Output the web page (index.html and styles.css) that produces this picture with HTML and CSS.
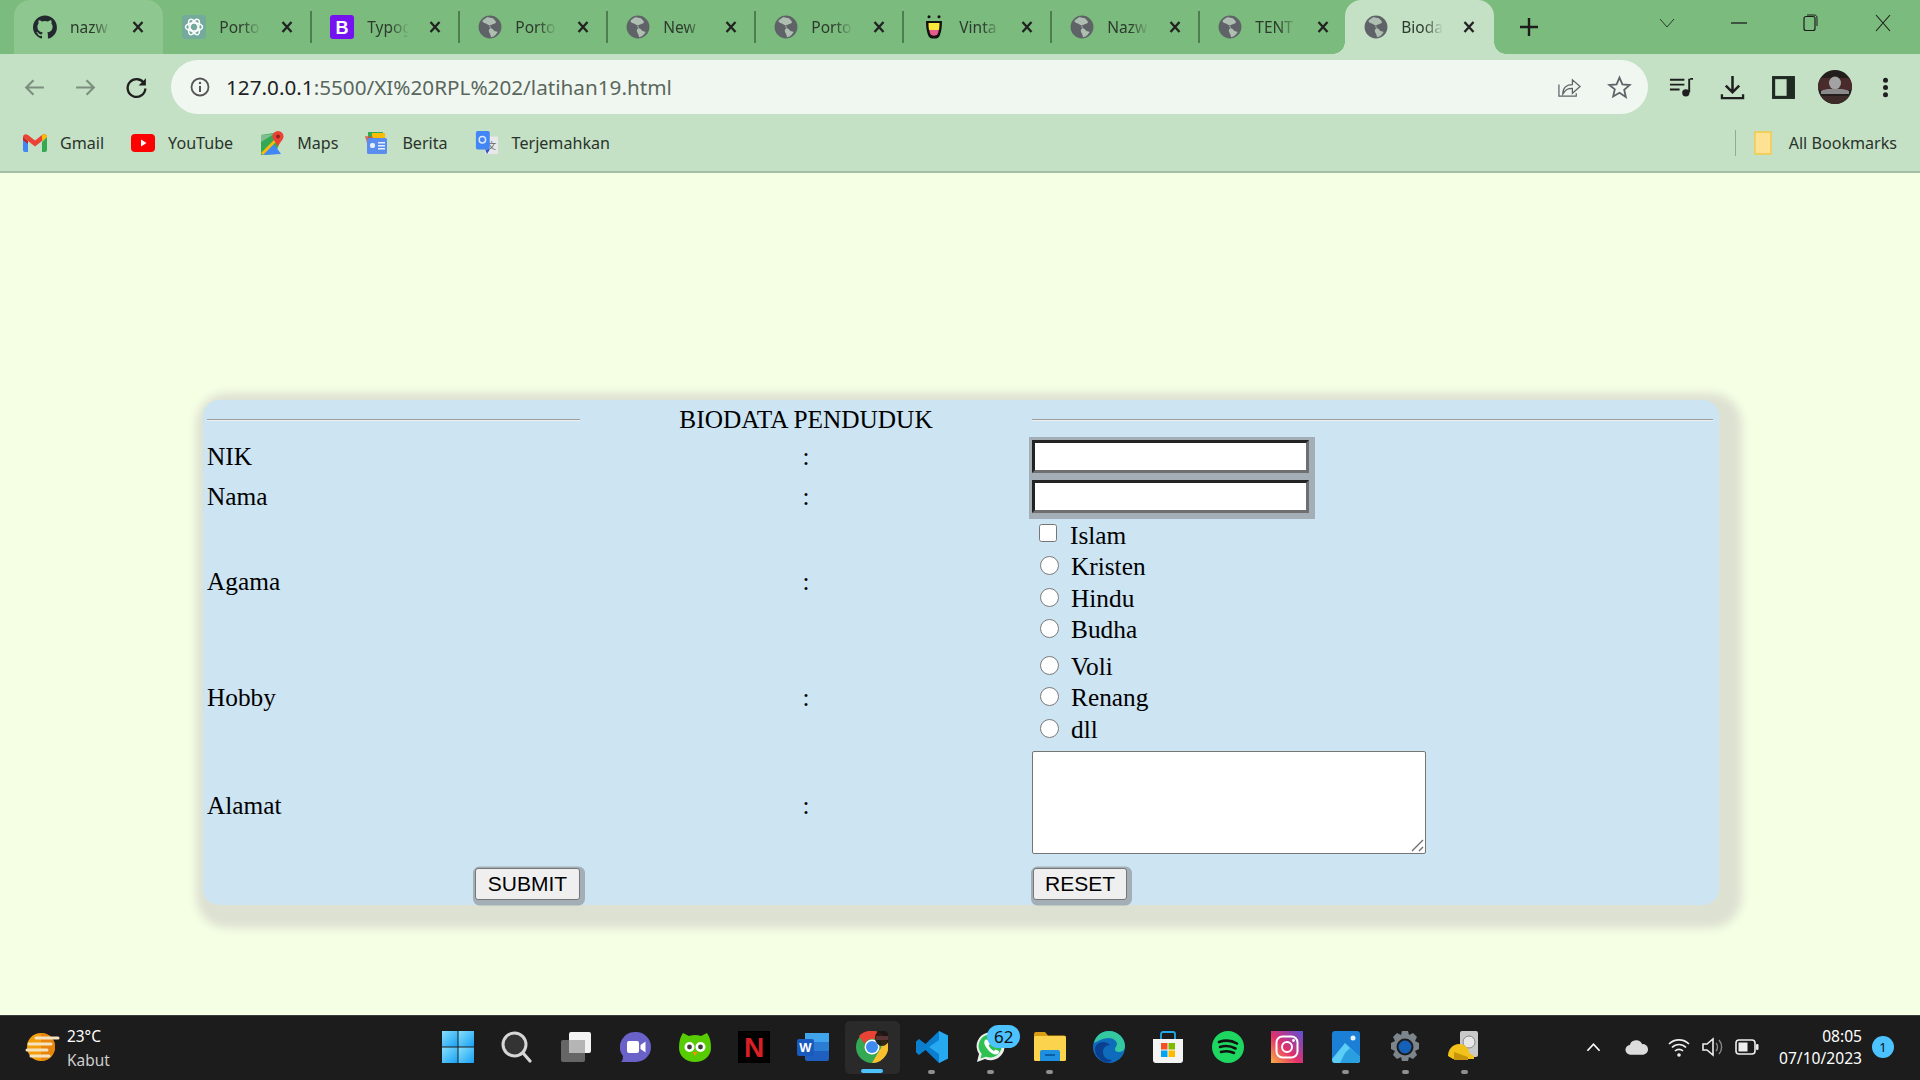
FILE: index.html
```html
<!DOCTYPE html>
<html lang="id">
<head>
<meta charset="utf-8">
<title>Biodata</title>
<link rel="stylesheet" href="styles.css">
</head>
<body>
<svg class="defs" width="0" height="0" aria-hidden="true">
  <symbol id="globe" viewBox="0 0 22 22">
    <circle cx="11" cy="11" r="10.5" fill="#5f6368"/>
    <path d="M9 1.500c-1.500 1.500-4 2-5 4 .5 2 3 2 4.500 3s3 .8 3 2.500-2 2-1.500 4 1.500 2.500 2 5.500c3-1 5-3 6-5-1.500-.8-3-.5-4-2s-3-1-3.500-2.500 1.500-2 3-2.500 2.500-.5 3-2c-.5-1.500-1.800-2.500-3-3.500-1.500-.5-3-.8-4.500-1z" fill="#aebfb2"/>
  </symbol>
  <symbol id="close" viewBox="0 0 16 16">
    <path d="M3.500 3l9 10M12.500 3l-9 10" stroke="#222" stroke-width="2.300" fill="none"/>
  </symbol>
</svg>

<header class="chrome">
  <div class="tabstrip">
    <div class="tab hover">
      <svg class="fav" viewBox="0 0 24 24"><path fill="#24292f" d="M12 .5C5.400.5 0 5.800 0 12.300c0 5.200 3.400 9.600 8.200 11.200.6.100.8-.3.800-.6v-2.100c-3.300.7-4-1.400-4-1.400-.5-1.400-1.300-1.800-1.300-1.800-1.100-.7.100-.7.100-.7 1.200.1 1.800 1.200 1.800 1.200 1.100 1.800 2.800 1.300 3.500 1 .1-.8.400-1.300.8-1.600-2.700-.3-5.500-1.300-5.500-5.900 0-1.300.5-2.400 1.200-3.200-.1-.3-.5-1.500.1-3.200 0 0 1-.3 3.300 1.200a11.700 11.700 0 0 1 6 0c2.300-1.500 3.300-1.200 3.300-1.200.7 1.700.2 2.900.1 3.200.8.800 1.200 1.900 1.200 3.200 0 4.600-2.800 5.600-5.500 5.900.4.400.8 1.100.8 2.200v3.300c0 .3.200.7.800.6 4.800-1.600 8.200-6 8.200-11.200C24 5.800 18.600.5 12 .5z"/></svg>
      <span class="tab-title">nazw</span>
      <svg class="tab-x"><use href="#close"/></svg>
    </div>
    <div class="tab sep">
      <svg class="fav" viewBox="0 0 24 24"><rect width="24" height="24" rx="3" fill="#74aa9c"/><g fill="none" stroke="#fff" stroke-width="1.500"><ellipse cx="12" cy="12" rx="8.500" ry="4"/><ellipse cx="12" cy="12" rx="8.500" ry="4" transform="rotate(60 12 12)"/><ellipse cx="12" cy="12" rx="8.500" ry="4" transform="rotate(120 12 12)"/></g></svg>
      <span class="tab-title">Porto</span>
      <svg class="tab-x"><use href="#close"/></svg>
    </div>
    <div class="tab sep">
      <svg class="fav" viewBox="0 0 24 24"><rect width="24" height="24" rx="3" fill="#7413f0"/><text x="12" y="18.500" class="logo-b">B</text></svg>
      <span class="tab-title">Typog</span>
      <svg class="tab-x"><use href="#close"/></svg>
    </div>
    <div class="tab sep"><svg class="fav"><use href="#globe"/></svg><span class="tab-title">Porto</span><svg class="tab-x"><use href="#close"/></svg></div>
    <div class="tab sep"><svg class="fav"><use href="#globe"/></svg><span class="tab-title">New</span><svg class="tab-x"><use href="#close"/></svg></div>
    <div class="tab sep"><svg class="fav"><use href="#globe"/></svg><span class="tab-title">Porto</span><svg class="tab-x"><use href="#close"/></svg></div>
    <div class="tab sep">
      <svg class="fav" viewBox="0 0 24 24"><path d="M4 6h16c0 5-.5 10-2 14-1 3-3 3.500-6 3.500S7 23 6 20C4.500 16 4 11 4 6z" fill="#111"/><path d="M6.500 8h11c0 3-.2 5-.6 7H7.100c-.4-2-.6-4-.6-7z" fill="#ffe63a"/><path d="M7.300 15h9.400c-.3 2-.8 3.500-1.400 4.500-1 1.500-5.600 1.500-6.600 0-.6-1-1.100-2.500-1.400-4.500z" fill="#e85a8c"/><circle cx="7" cy="1.800" r="1.500" fill="#111"/><circle cx="17" cy="1.800" r="1.500" fill="#111"/></svg>
      <span class="tab-title">Vinta</span>
      <svg class="tab-x"><use href="#close"/></svg>
    </div>
    <div class="tab sep"><svg class="fav"><use href="#globe"/></svg><span class="tab-title">Nazw</span><svg class="tab-x"><use href="#close"/></svg></div>
    <div class="tab short"><svg class="fav"><use href="#globe"/></svg><span class="tab-title">TENT</span><svg class="tab-x"><use href="#close"/></svg></div>
    <div class="tab active"><svg class="fav"><use href="#globe"/></svg><span class="tab-title">Bioda</span><svg class="tab-x"><use href="#close"/></svg></div>
    <svg class="newtab" viewBox="0 0 20 20"><path d="M10 1v18M1 10h18" stroke="#1d1d1d" stroke-width="2.400"/></svg>
    <div class="winctl">
      <svg viewBox="0 0 72 20"><path d="M29 6l7 8 7-8" stroke="#2c3a2d" fill="none"/></svg>
      <svg viewBox="0 0 72 20"><path d="M28 10h16" stroke="#1d1d1d" stroke-width="1.300"/></svg>
      <svg viewBox="0 0 72 20"><rect x="29" y="3.500" width="11" height="14" rx="2" fill="none" stroke="#1d1d1d" stroke-width="1.200"/><path d="M32 2h7c2 0 3 1 3 3v8" fill="none" stroke="#1d1d1d"/></svg>
      <svg viewBox="0 0 72 20"><path d="M29 2l14 16M43 2L29 18" stroke="#1d1d1d" stroke-width="1.100"/></svg>
    </div>
  </div>

  <div class="toolbar">
    <div class="navbtn"><svg viewBox="0 0 24 24"><path d="M21 12H4M11 5l-7 7 7 7" fill="none" stroke="#7c8e7e" stroke-width="2"/></svg></div>
    <div class="navbtn"><svg viewBox="0 0 24 24"><path d="M3 12h17M13 5l7 7-7 7" fill="none" stroke="#7c8e7e" stroke-width="2"/></svg></div>
    <div class="navbtn"><svg viewBox="0 0 24 24"><path d="M19.500 8.500A8.500 8.500 0 1 0 20.500 13" fill="none" stroke="#1f1f1f" stroke-width="2.200"/><path d="M21 3v7h-7z" fill="#1f1f1f"/></svg></div>
    <div class="omnibox">
      <svg class="info" viewBox="0 0 20 20"><circle cx="10" cy="10" r="8.500" fill="none" stroke="#555" stroke-width="1.800"/><path d="M10 9v6" stroke="#555" stroke-width="2"/><circle cx="10" cy="6" r="1.200" fill="#555"/></svg>
      <span class="url"><span class="host">127.0.0.1</span>:5500/XI%20RPL%202/latihan19.html</span>
      <div class="omni-actions">
        <div class="navbtn small"><svg viewBox="0 0 26 24"><path d="M2 9v12h18v-3" fill="none" stroke="#5f6368" stroke-width="1.300"/><path d="M6 19c0-7 4-10 10-10V4l8 7-8 7v-5c-5 0-7 1-10 6z" fill="none" stroke="#5f6368" stroke-width="1.300"/></svg></div>
        <div class="navbtn small"><svg viewBox="0 0 24 24"><path d="M12 2.500l2.800 6.500 7 .6-5.300 4.600 1.600 6.900L12 17l-6.100 3.600 1.600-6.900L2.200 9.600l7-.6z" fill="none" stroke="#5f6368" stroke-width="1.700"/></svg></div>
      </div>
    </div>
    <div class="tools">
      <div class="navbtn"><svg viewBox="0 0 26 24"><path d="M1 4h15M1 9h15M1 14h10" stroke="#1f1f1f" stroke-width="2"/><path d="M22 3h3M21 3v14" stroke="#1f1f1f" stroke-width="2" fill="none"/><circle cx="17.500" cy="17.500" r="3.800" fill="#1f1f1f"/></svg></div>
      <div class="navbtn"><svg viewBox="0 0 26 26"><path d="M13 1v16M6 11l7 7 7-7" stroke="#1f1f1f" stroke-width="2.600" fill="none"/><path d="M2 20v4h22v-4" stroke="#1f1f1f" stroke-width="2.400" fill="none"/></svg></div>
      <div class="navbtn"><svg viewBox="0 0 24 24"><rect x="1" y="1" width="22" height="22" fill="#1f2a22"/><rect x="4" y="4" width="11" height="16" fill="#c4e0c5"/></svg></div>
      <div class="navbtn"><svg class="avatar" viewBox="0 0 34 34"><defs><clipPath id="avc"><circle cx="17" cy="17" r="17"/></clipPath></defs><g clip-path="url(#avc)"><rect width="34" height="34" fill="#231d1c"/><rect y="8" width="34" height="12" fill="#4a2b2b"/><ellipse cx="17" cy="13" rx="6" ry="6.500" fill="#a3a3a3"/><path d="M3 21c4-3 24-3 28 0v3H3z" fill="#8a8a8a"/><rect y="26" width="34" height="8" fill="#3d2b2a"/></g></svg></div>
      <div class="navbtn"><svg viewBox="0 0 6 24"><circle cx="3" cy="5" r="2.400" fill="#1f1f1f"/><circle cx="3" cy="12" r="2.400" fill="#1f1f1f"/><circle cx="3" cy="19" r="2.400" fill="#1f1f1f"/></svg></div>
    </div>
  </div>

  <nav class="bookmarks">
    <a class="bm">
      <svg viewBox="0 0 24 18"><path d="M0 3v13a2 2 0 0 0 2 2h3V8z" fill="#4285f4"/><path d="M24 3v13a2 2 0 0 1-2 2h-3V8z" fill="#34a853"/><path d="M0 3l5 4v3L0 6z" fill="#c5221f"/><path d="M0 3c0-2.500 3-3.500 5-2l7 5.500L19 1c2-1.500 5-.5 5 2l-12 9.500z" fill="#ea4335"/><path d="M19 1c2-1.500 5-.5 5 2l-5 4z" fill="#fbbc04"/></svg>
      <span>Gmail</span>
    </a>
    <a class="bm">
      <svg viewBox="0 0 24 18"><rect width="24" height="18" rx="4" fill="#f00"/><path d="M10 5.500l5.500 3.500-5.500 3.500z" fill="#fff"/></svg>
      <span>YouTube</span>
    </a>
    <a class="bm">
      <svg viewBox="0 0 24 24"><path d="M1 4l13-2 6 6-4 15-15 1z" fill="#34a853"/><path d="M1 24l12-12 8 11z" fill="#4285f4"/><path d="M1 22L14 9l2 2L3 24z" fill="#fbbc04"/><path d="M14 3L1 4v7z" fill="#7fbf8f"/><path d="M18 0a5.500 5.500 0 0 1 5.500 5.500C23.500 9 19 12 18 16c-1-4-5.500-7-5.500-10.500A5.500 5.500 0 0 1 18 0z" fill="#ea4335"/><circle cx="18" cy="5.500" r="2" fill="#9a1f17"/></svg>
      <span>Maps</span>
    </a>
    <a class="bm">
      <svg viewBox="0 0 24 22"><rect x="3" y="0" width="15" height="8" fill="#34a853"/><rect x="7" y="1" width="13" height="8" fill="#fbbc04"/><path d="M0 4l4 14h4V5z" fill="#ea4335" opacity=".8"/><rect x="2" y="6" width="20" height="16" rx="1.500" fill="#5b8def"/><rect x="5" y="11" width="5" height="5" rx="2" fill="#e8f0fe"/><rect x="13" y="10" width="7" height="1.500" fill="#e8f0fe"/><rect x="13" y="13" width="7" height="1.500" fill="#e8f0fe"/><rect x="13" y="16" width="7" height="1.500" fill="#e8f0fe"/></svg>
      <span>Berita</span>
    </a>
    <a class="bm">
      <svg viewBox="0 0 24 26"><rect x="10" y="6" width="14" height="19" fill="#e8e8e8"/><text x="17" y="20" class="logo-t">文</text><rect x="0" y="0" width="15" height="20" rx="2" fill="#4285f4"/><path d="M10 20l2 5 3-5z" fill="#2a56c6"/><circle cx="7" cy="9.500" r="3.500" fill="none" stroke="#dbe7fd" stroke-width="1.600"/></svg>
      <span>Terjemahkan</span>
    </a>
    <div class="bm-end">
      <i class="bm-sep"></i>
      <svg class="folder" viewBox="0 0 18 24"><path d="M1 1h16v22H1z" fill="#fde293" stroke="#f3c94a" stroke-width="1.400"/></svg>
      <span>All Bookmarks</span>
    </div>
  </nav>
</header>

<main class="page">
  <section class="panel">
    <table class="form-table">
      <colgroup><col class="c1"><col class="c2"><col class="c3"></colgroup>
      <tr class="r-title"><td><hr class="rule"></td><td class="center">BIODATA PENDUDUK</td><td><hr class="rule"></td></tr>
      <tr class="r-input"><td class="lbl">NIK</td><td class="center lbl">:</td><td><input type="text" class="field"></td></tr>
      <tr class="r-input"><td class="lbl">Nama</td><td class="center lbl">:</td><td><input type="text" class="field"></td></tr>
      <tr class="r-agama">
        <td class="lbl">Agama</td><td class="center lbl">:</td>
        <td>
          <label class="opt"><input type="checkbox" class="check"><span>Islam</span></label>
          <label class="opt"><input type="radio" name="a" class="radio"><span>Kristen</span></label>
          <label class="opt"><input type="radio" name="a" class="radio"><span>Hindu</span></label>
          <label class="opt"><input type="radio" name="a" class="radio"><span>Budha</span></label>
        </td>
      </tr>
      <tr class="r-hobby">
        <td class="lbl">Hobby</td><td class="center lbl">:</td>
        <td>
          <label class="opt"><input type="radio" name="h" class="radio"><span>Voli</span></label>
          <label class="opt"><input type="radio" name="h" class="radio"><span>Renang</span></label>
          <label class="opt"><input type="radio" name="h" class="radio"><span>dll</span></label>
        </td>
      </tr>
      <tr class="r-alamat"><td class="lbl">Alamat</td><td class="center lbl">:</td><td>
        <div class="area-wrap">
          <textarea class="area"></textarea>
          <svg class="grip" viewBox="0 0 13 13"><path d="M12 1L1 12M12 8l-4 4" stroke="#6f6f6f" stroke-width="1.400"/></svg>
        </div>
      </td></tr>
      <tr class="r-btn"><td><button class="btn submit" type="button">SUBMIT</button></td><td></td><td><button class="btn reset" type="button">RESET</button></td></tr>
    </table>
  </section>
</main>

<footer class="taskbar">
  <div class="weather">
    <svg viewBox="0 0 36 32"><circle cx="17" cy="16" r="14" fill="#f59e0b"/><path d="M17 2a14 14 0 0 1 0 28z" fill="#e8850c"/><path d="M12 7h22M5 13h22M3 19h20M7 25h18" stroke="#f5e3c0" stroke-width="3" stroke-linecap="round"/></svg>
    <div class="wtext"><span class="temp">23°C</span><span class="cond">Kabut</span></div>
  </div>
  <div class="apps">
    <div class="app"><svg viewBox="0 0 32 32"><defs><linearGradient id="w1" x1="0" y1="0" x2="1" y2="1"><stop offset="0" stop-color="#86e0fb"/><stop offset="1" stop-color="#18a0f5"/></linearGradient></defs><rect x="0" y="0" width="15.500" height="15.500" fill="url(#w1)"/><rect x="16.500" y="0" width="15.500" height="15.500" fill="url(#w1)"/><rect x="0" y="16.500" width="15.500" height="15.500" fill="url(#w1)"/><rect x="16.500" y="16.500" width="15.500" height="15.500" fill="url(#w1)"/></svg></div>
    <div class="app"><svg viewBox="0 0 32 32"><circle cx="13.500" cy="13.500" r="11.500" fill="#333" stroke="#d6d6d6" stroke-width="3"/><path d="M22 22l7 8" stroke="#d6d6d6" stroke-width="3.200" stroke-linecap="round"/></svg></div>
    <div class="app"><svg viewBox="0 0 32 32"><rect x="1" y="9" width="24" height="22" rx="2" fill="#666"/><rect x="9" y="1" width="22" height="21" rx="2" fill="#f2f2f2"/><rect x="9" y="9" width="16" height="13" fill="#b5b5b5"/></svg></div>
    <div class="app"><svg viewBox="0 0 32 32"><path d="M16 1a15 15 0 0 1 0 30H1c1.500-1 2-3 2-6A15 15 0 0 1 16 1z" fill="#6a62c9"/><rect x="7" y="10" width="12" height="12" rx="2" fill="#fff"/><path d="M20.500 14l5-3.500v11l-5-3.500z" fill="#fff"/></svg></div>
    <div class="app"><svg viewBox="0 0 32 32"><path d="M4 2l6 3c4-1.500 8-1.500 12 0l6-3c3 4 4 9 4 15 0 8-7 14-16 14S0 25 0 17C0 11 1 6 4 2z" fill="#58cc02"/><circle cx="10.500" cy="16" r="5" fill="#fff"/><circle cx="21.500" cy="16" r="5" fill="#fff"/><circle cx="10.500" cy="16" r="2.400" fill="#3c3c3c"/><circle cx="21.500" cy="16" r="2.400" fill="#3c3c3c"/><path d="M13.500 21h5l-2.500 4z" fill="#f49000"/></svg></div>
    <div class="app"><svg viewBox="0 0 32 32"><rect width="32" height="32" fill="#000"/><text x="16" y="26" class="logo-n">N</text></svg></div>
    <div class="app"><svg viewBox="0 0 32 32"><rect x="8" y="2" width="24" height="28" rx="2" fill="#1f5fbf"/><rect x="8" y="2" width="24" height="9" fill="#41a5ee"/><rect x="8" y="11" width="24" height="9" fill="#2b7cd3"/><rect x="0" y="8" width="17" height="17" rx="2" fill="#185abd"/><text x="8.500" y="21" class="logo-w">W</text></svg></div>
    <div class="app current"><svg viewBox="0 0 32 32"><circle cx="16" cy="16" r="16" fill="#34a853"/><path d="M16 0a16 16 0 0 1 14 8H16a8 8 0 0 0-7.500 5L3 5a16 16 0 0 1 13-5z" fill="#ea4335"/><path d="M30 8a16 16 0 0 1-14 24l7-12a8 8 0 0 0 0-12z" fill="#fbc02d"/><circle cx="16" cy="16" r="7.500" fill="#fff"/><circle cx="16" cy="16" r="6" fill="#3f8cf0"/><ellipse cx="26" cy="7" rx="7" ry="8" fill="#1c1414" opacity=".9"/><rect x="20" y="5" width="12" height="4" fill="#5a3434"/></svg><i class="bar"></i></div>
    <div class="app dot"><svg viewBox="0 0 32 32"><path d="M23 0l9 4.500v23L23 32 9.500 19 3 24l-3-2.500V10.500L3 8l6.500 5z" fill="#0a7fd0"/><path d="M23 0l9 4.500v23L23 32zM23 9L13 16l10 7z" fill="#27a9ef"/></svg></div>
    <div class="app dot"><svg viewBox="0 0 32 32"><path d="M2 31l2-8A14 14 0 1 1 10 28z" fill="#eee"/><path d="M5.500 27.500l1.200-4.700A11.500 11.500 0 1 1 11 25.700z" fill="#2dc24f"/><path d="M10.500 8.500c-2 2-1.500 5 1.500 9s6 6 9 6c2 0 3.500-2 3-3.500l-3.500-1.500-1.500 1.500c-2-1-4.500-3.500-5.500-5.500l1.500-1.500-1.500-4z" fill="#fff"/></svg><span class="badge">62</span></div>
    <div class="app dot"><svg viewBox="0 0 32 32"><path d="M0 3a2 2 0 0 1 2-2h9l3 3.500h16a2 2 0 0 1 2 2V9H0z" fill="#d99d13"/><rect x="0" y="5" width="32" height="25" rx="1.500" fill="#fcd34d"/><path d="M8 19h16a2 2 0 0 1 2 2v9H6v-9a2 2 0 0 1 2-2z" fill="#1f8fe0"/><rect x="11" y="23" width="10" height="2" fill="#0a5ea8"/></svg></div>
    <div class="app"><svg viewBox="0 0 32 32"><circle cx="16" cy="16" r="16" fill="#0f6cbd"/><path d="M1 12C3 4 9 0 16 0c9 0 16 7 16 15 0 3-2 6-6 6-3 0-4-1-4-3s2-3 2-5c0-3-4-6-8-6-6 0-11 3-15 5z" fill="#34c8a0"/><path d="M12 31C6 29 2 24 2 18c0-4 4-7 8-7 3 0 6 1.500 7 3-4 0-7 3-7 7 0 5 4 8 9 8l-2 2c-2 .5-3.500.5-5 0z" fill="#0b3f8f"/></svg></div>
    <div class="app"><svg viewBox="0 0 32 32"><path d="M1 8h30v21a3 3 0 0 1-3 3H4a3 3 0 0 1-3-3z" fill="#f4f4f4"/><path d="M9 8V3a2 2 0 0 1 2-2h10a2 2 0 0 1 2 2v5" fill="none" stroke="#25a6e8" stroke-width="1.800"/><rect x="9" y="12" width="6.500" height="6.500" fill="#f25022"/><rect x="16.500" y="12" width="6.500" height="6.500" fill="#7fba00"/><rect x="9" y="19.500" width="6.500" height="6.500" fill="#00a4ef"/><rect x="16.500" y="19.500" width="6.500" height="6.500" fill="#ffb900"/></svg></div>
    <div class="app"><svg viewBox="0 0 32 32"><circle cx="16" cy="16" r="16" fill="#1ed760"/><path d="M7 11c6-2 13-1.500 18 1.500M8 16c5-1.500 11-1 15.500 1.500M9 21c4-1 9-1 13 1" stroke="#111" stroke-width="2.600" fill="none" stroke-linecap="round"/></svg></div>
    <div class="app"><svg viewBox="0 0 32 32"><defs><linearGradient id="ig" x1="0" y1="1" x2="1" y2="0"><stop offset="0" stop-color="#fdb044"/><stop offset=".45" stop-color="#e1306c"/><stop offset="1" stop-color="#5b51d8"/></linearGradient></defs><rect width="32" height="32" fill="url(#ig)"/><rect x="5.500" y="5.500" width="21" height="21" rx="6" fill="none" stroke="#fff" stroke-width="2"/><circle cx="16" cy="16" r="5" fill="none" stroke="#fff" stroke-width="2"/><circle cx="22.500" cy="9.500" r="1.400" fill="#fff"/></svg></div>
    <div class="app dot"><svg viewBox="0 0 32 32"><rect x="2" y="0" width="28" height="32" rx="3" fill="#1b7fd6"/><circle cx="23" cy="7" r="2.500" fill="#e6f3fd"/><path d="M2 28L15 12l15 14v3a3 3 0 0 1-3 3H5a3 3 0 0 1-3-3z" fill="#5ccdf5"/><path d="M15 22l5-5 10 9v3a3 3 0 0 1-3 3H10z" fill="#2a9fe0"/></svg></div>
    <div class="app dot"><svg viewBox="0 0 32 32"><path d="M13 0h6l1 4 4-2 4 4-2 4 4 2v6l-4 2 2 4-4 4-4-2-1 4h-6l-1-4-4 2-4-4 2-4-4-2v-6l4-2-2-4 4-4 4 2z" fill="#7c858c"/><circle cx="16" cy="16" r="8.500" fill="#1c1c1c"/><circle cx="16" cy="16" r="6.500" fill="#1560b8"/></svg></div>
    <div class="app dot"><svg viewBox="0 0 32 32"><rect x="12" y="0" width="18" height="26" rx="2" fill="#c9c9c9"/><circle cx="21" cy="11" r="6" fill="#e8e8e8" stroke="#888"/><path d="M0 25c0-7 5-12 11-12s10 4 10 9l5 3v3H5z" fill="#f3c21a"/><path d="M6 21l14 5v3H6z" fill="#c7950c"/></svg></div>
  </div>
  <div class="tray">
    <svg class="t-chev" viewBox="0 0 16 10"><path d="M1.500 9L8 2l6.500 7" fill="none" stroke="#fff" stroke-width="1.800"/></svg>
    <svg class="t-cloud" viewBox="0 0 24 18"><path d="M6 17a5 5 0 0 1-1-10 7 7 0 0 1 13-1 5.500 5.500 0 0 1 1 11z" fill="#dcdcdc"/></svg>
    <svg class="t-wifi" viewBox="0 0 22 22"><g fill="none" stroke="#eee" stroke-width="1.700"><path d="M1 8c5.500-5.500 14.500-5.500 20 0M4 11.500c4-4 10-4 14 0M7 15c2.200-2.200 5.800-2.200 8 0"/></g><circle cx="11" cy="19" r="1.800" fill="#eee"/></svg>
    <svg class="t-vol" viewBox="0 0 22 22"><path d="M2 8h4l6-5v16l-6-5H2z" fill="none" stroke="#eee" stroke-width="1.600"/><path d="M15 7c2 2 2 6 0 8M18 4c3.500 4 3.500 10 0 14" fill="none" stroke="#888" stroke-width="1.400"/></svg>
    <svg class="t-bat" viewBox="0 0 24 16"><rect x="1" y="1" width="19" height="14" rx="3" fill="none" stroke="#eee" stroke-width="1.600"/><rect x="3.500" y="3.500" width="9" height="9" fill="#eee"/><rect x="21" y="5" width="2.500" height="6" rx="1" fill="#eee"/></svg>
    <div class="clock"><span>08:05</span><span>07/10/2023</span></div>
    <span class="notif">1</span>
  </div>
</footer>
</body>
</html>
```
FILE: styles.css
```css
* { box-sizing: border-box; }
html, body { height: 100%; }
body {
  margin: 0;
  width: 1920px;
  height: 1080px;
  overflow: hidden;
  display: flex;
  flex-direction: column;
  background: #f5ffe4;
  font-family: "Noto Sans", "Open Sans", sans-serif;
}
.defs { position: absolute; }

/* browser chrome */
.chrome { flex: none; height: 173px; background: #c4e0c5; border-bottom: 2px solid #a6bea7; }
.tabstrip { height: 54px; background: #7bbb7d; display: flex; align-items: flex-end; padding-left: 14px; }
.tab {
  position: relative;
  width: 148px;
  height: 54px;
  display: flex;
  align-items: center;
  padding: 0 0 0 19px;
  flex: none;
}
.tab.short { width: 146px; }
.tab.hover { width: 149.300px; background: #8ec78f; border-radius: 16px 16px 0 0; }
.tab.active { width: 149px; background: #c4e0c5; border-radius: 16px 16px 0 0; }
.tab.sep::after {
  content: "";
  position: absolute;
  right: -1px;
  top: 11px;
  height: 32px;
  border-right: 2px solid #4f7d52;
}
.tab.active::before, .tab.active::after {
  content: "";
  position: absolute;
  bottom: 0;
  width: 12px;
  height: 12px;
}
.tab.active::before { left: -12px; background: radial-gradient(circle at 0 0, transparent 11.500px, #c4e0c5 12px); }
.tab.active::after { right: -12px; background: radial-gradient(circle at 100% 0, transparent 11.500px, #c4e0c5 12px); }
.fav { width: 24px; height: 26px; flex: none; }
.tab-title {
  width: 42px;
  margin-left: 13px;
  font-size: 15.500px;
  color: #2d3a2e;
  white-space: nowrap;
  -webkit-mask-image: linear-gradient(90deg, #000 55%, transparent 100%);
  mask-image: linear-gradient(90deg, #000 55%, transparent 100%);
}
.tab-x { width: 16px; height: 16px; margin-left: 18px; flex: none; }
.logo-b { font: 700 18px "Liberation Sans", sans-serif; fill: #fff; text-anchor: middle; }
.logo-n { font: 700 28px "Liberation Sans", sans-serif; fill: #d81f26; text-anchor: middle; }
.logo-w { font: 700 13px "Liberation Sans", sans-serif; fill: #fff; text-anchor: middle; }
.logo-t { font: 10px "Noto Sans CJK SC", sans-serif; fill: #666; text-anchor: middle; }
.newtab { width: 20px; height: 20px; margin: 0 0 17px 25px; flex: none; }
.winctl { margin-left: auto; display: flex; align-self: flex-start; margin-top: 13px; padding-right: 1px; }
.winctl svg { width: 72px; height: 20px; }

.toolbar { height: 65px; padding: 6px 8px 5px 8.500px; display: flex; align-items: center; }
.navbtn { width: 51px; height: 54px; display: flex; align-items: center; justify-content: center; flex: none; }
.navbtn svg { width: 25px; height: 25px; }
.navbtn .avatar { width: 34px; height: 34px; }
.navbtn.small { width: 50px; }
.omnibox {
  width: 1477px;
  height: 54px;
  margin-left: 9.500px;
  flex: none;
  background: #f0f7f1;
  border-radius: 27px;
  display: flex;
  align-items: center;
  padding: 0 4px 0 19px;
}
.info { width: 20px; height: 20px; flex: none; }
.url { margin-left: 16px; font-size: 20.700px; color: #5a675c; white-space: nowrap; }
.host { color: #1f1f1f; }
.omni-actions { margin-left: auto; display: flex; }
.tools { display: flex; margin-left: 8px; }

.bookmarks { height: 52px; display: flex; align-items: center; padding: 0 23px 4px 23px; font-size: 16.100px; color: #2a332b; }
.bm { display: flex; align-items: center; margin-right: 27px; }
.bm svg { width: 24px; height: 24px; margin-right: 13px; flex: none; }
.bm-end { margin-left: auto; display: flex; align-items: center; }
.bm-sep { width: 1px; height: 26px; background: #93a994; }
.folder { width: 18px; height: 24px; margin: 0 17px 0 18px; }

/* page */
.page { flex: 1; min-height: 0; padding: 227px 0 0 203px; }
.panel {
  width: 1516px;
  height: 505px;
  padding: 0 6px 0 4px;
  background: #cde4f3;
  border-radius: 16px;
  box-shadow: 8px 8px 10px 15px #dde1d2;
}
.form-table {
  width: 1506px;
  table-layout: fixed;
  border-collapse: collapse;
  font-family: "Liberation Serif", "Times New Roman", serif;
  font-size: 25.330px;
  color: #000;
}
.form-table td { padding: 0; vertical-align: middle; }
.form-table td.lbl { padding-bottom: 2px; }
.c1 { width: 373px; }
.c2 { width: 452px; }
.c3 { width: 681px; }
.center { text-align: center; }
.r-title td { height: 37px; padding-top: 2px; }
.r-input td { height: 40px; }
.r-agama td { height: 131px; }
.r-hobby td { height: 100px; }
.r-alamat td { height: 117px; }
.form-table .r-btn td { height: 40px; padding-top: 3px; vertical-align: top; }
.rule { margin: 0; border: 0; border-top: 1px solid #9c9c9c; border-bottom: 1px solid #eef1ee; }
.field {
  display: block;
  width: 277px;
  height: 33px;
  margin-top: -1px;
  padding: 0 4px;
  background: #fff;
  border: 3px solid;
  border-color: #232323 #6f6f6f #6f6f6f #232323;
  box-shadow: 1.500px 1.500px 0 4.500px #a3aeb6;
}
.opt { display: flex; align-items: center; height: 31.300px; }
.radio { width: 19px; height: 19px; margin: -2px 12px 0 8px; flex: none; }
.check { width: 18px; height: 18px; margin: -5px 13px 0 7px; flex: none; }
.area-wrap { position: relative; width: 394px; margin-bottom: 8px; }
.area {
  display: block;
  width: 394px;
  height: 103px;
  background: #fff;
  border: 1px solid #767676;
  border-radius: 2px;
  resize: none;
}
.grip { position: absolute; right: 2px; bottom: 2px; width: 13px; height: 13px; }
.btn {
  display: block;
  height: 32px;
  padding: 0;
  font-family: "Liberation Sans", Arial, sans-serif;
  font-size: 21px;
  color: #000;
  background: #efefef;
  border: 1px solid #767676;
  border-radius: 3px;
  box-shadow: 1.500px 2px 0 3.500px #a3aeb6;
}
.submit { width: 105px; margin-left: auto; }
.reset { width: 94px; margin-left: 1px; }

/* taskbar */
.taskbar {
  flex: none;
  height: 65px;
  background: #1c1c1c;
  border-top: 1px solid #3a3a3a;
  display: flex;
  align-items: flex-start;
  color: #fff;
}
.weather { width: 428.500px; height: 62px; flex: none; display: flex; align-items: center; padding-left: 24px; }
.weather svg { width: 36px; height: 32px; }
.wtext { display: flex; flex-direction: column; margin-left: 7px; padding-top: 3.400px; font-size: 15.400px; line-height: 23.400px; }
.cond { color: #cfcfcf; }
.apps { display: flex; }
.app { position: relative; width: 59.200px; height: 62px; display: flex; align-items: center; justify-content: center; flex: none; }
.app svg { width: 32px; height: 32px; }
.app.current::before {
  content: "";
  position: absolute;
  left: 2.500px;
  right: 2.500px;
  top: 5px;
  bottom: 4px;
  border-radius: 5px;
  background: #2a2a2a;
}
.app.current svg { position: relative; }
.bar { position: absolute; left: 18px; top: 53px; width: 22px; height: 4px; border-radius: 2px; background: #4cc2ff; }
.app.dot::after {
  content: "";
  position: absolute;
  left: 26px;
  top: 54px;
  width: 7px;
  height: 4px;
  border-radius: 2px;
  background: #8f8f8f;
}
.badge {
  position: absolute;
  left: 26px;
  top: 9px;
  width: 33px;
  height: 23px;
  border-radius: 12px;
  background: #4cc2ff;
  color: #111;
  font-size: 17px;
  line-height: 23px;
  text-align: center;
}
.tray { margin-left: auto; height: 62px; display: flex; align-items: center; padding-right: 26px; }
.t-chev { width: 15px; height: 10px; }
.t-cloud { width: 23px; height: 18px; margin-left: 24px; }
.t-wifi { width: 22px; height: 22px; margin-left: 20px; }
.t-vol { width: 22px; height: 22px; margin-left: 11px; }
.t-bat { width: 24px; height: 16px; margin-left: 12px; }
.clock { display: flex; flex-direction: column; align-items: flex-end; margin-left: 20px; padding-top: .6px; font-size: 15.600px; line-height: 22.600px; }
.notif {
  width: 22px;
  height: 22px;
  margin-left: 10px;
  border-radius: 50%;
  background: #4cc2ff;
  color: #111;
  font-size: 13px;
  line-height: 22px;
  text-align: center;
}
```
